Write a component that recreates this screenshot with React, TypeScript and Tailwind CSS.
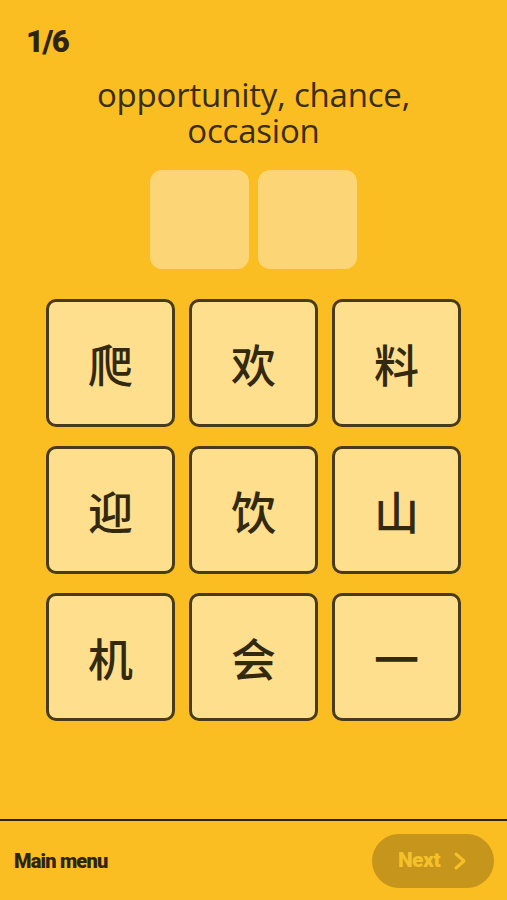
const tiles = ["爬", "欢", "料", "迎", "饮", "山", "机", "会", "一"];

export default function App() {
  return (
    <div className="flex h-[900px] w-full flex-col bg-[#fbbe22] text-[#3a2d0c]">
      <div className="flex flex-1 flex-col">
        <div className="pl-[26px] pt-[24px] font-['Roboto',sans-serif] text-[31px] font-black leading-[36px] tracking-[-1.5px] text-[#2e2410]">
          1/6
        </div>

        <h1 className="mx-auto mt-[17px] max-w-[380px] text-center font-['Open_Sans',sans-serif] text-[33px] font-medium leading-[36px] tracking-[-0.2px]">
          opportunity, chance, occasion
        </h1>

        <div className="mt-[21px] flex justify-center gap-[9px]">
          <div className="h-[99px] w-[99px] rounded-[12px] bg-[#fcd576]" />
          <div className="h-[99px] w-[99px] rounded-[12px] bg-[#fcd576]" />
        </div>

        <div className="mx-auto mt-[30px] grid grid-cols-[repeat(3,129px)] grid-rows-[repeat(3,128px)] gap-x-[14px] gap-y-[19px]">
          {tiles.map((t, i) => (
            <button
              key={i}
              className="flex items-center justify-center rounded-[10px] border-[3px] border-[#473b1c] bg-[#fddf8e] font-['Noto_Sans_CJK_SC',sans-serif] text-[45px] font-medium leading-none text-[#33290e]"
            >
              {t}
            </button>
          ))}
        </div>
      </div>

      <div className="flex h-[81px] items-center justify-between border-t-2 border-[#2b2210] pl-[14px] pr-[13px]">
        <span className="font-['Roboto',sans-serif] text-[20px] font-black tracking-[-0.8px] text-[#2e2410]">
          Main menu
        </span>
        <button className="flex h-[54px] w-[122px] items-center justify-center gap-[12px] rounded-full bg-[#c6951b] font-['Roboto',sans-serif] text-[21px] font-black tracking-[-0.5px] text-[#f4c02b]">
          Next
          <svg width="16" height="20" viewBox="0 0 16 20" fill="none">
            <polyline
              points="4,3 12,10 4,17"
              stroke="#f4c02b"
              strokeWidth="3"
              strokeLinecap="round"
              strokeLinejoin="round"
            />
          </svg>
        </button>
      </div>
    </div>
  );
}
